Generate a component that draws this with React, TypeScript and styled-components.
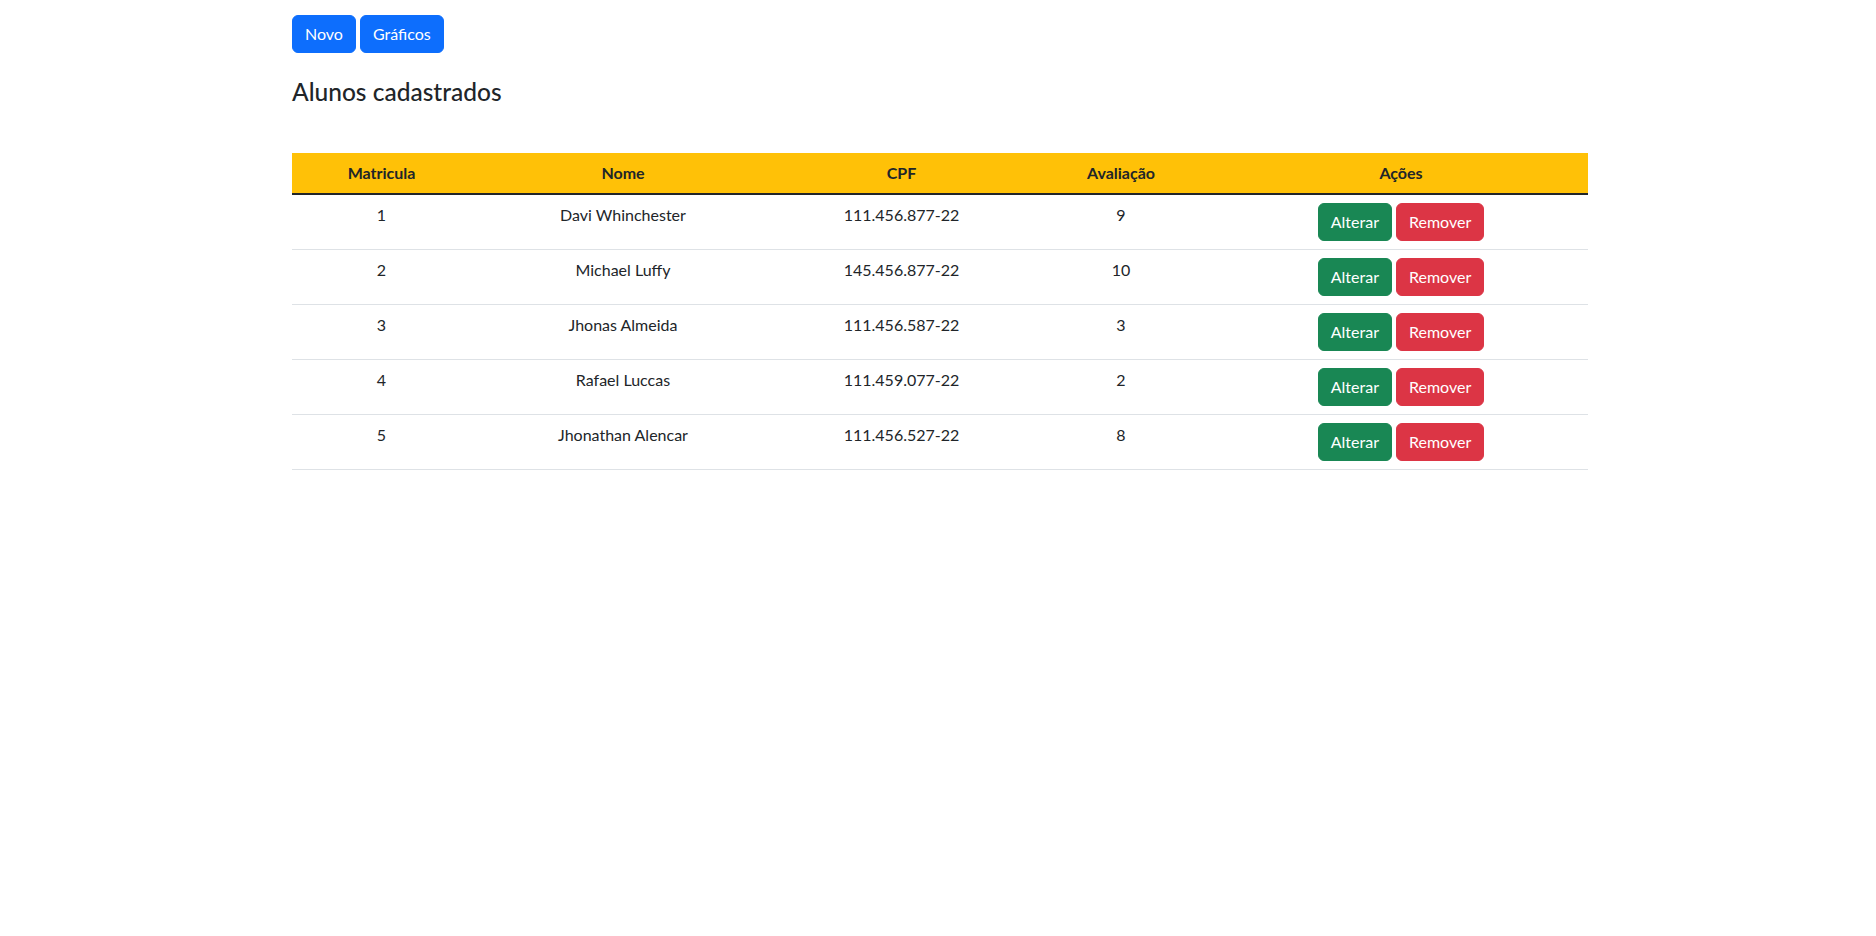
import React from "react";
import styled, { createGlobalStyle } from "styled-components";

const GlobalStyle = createGlobalStyle`
  * {
    box-sizing: border-box;
  }
  body {
    margin: 0;
    font-family: "Segoe UI", Lato, "Noto Sans", sans-serif;
    font-size: 16px;
    line-height: 1.5;
    color: #212529;
    background: #fff;
  }
`;

type Aluno = {
  matricula: number;
  nome: string;
  cpf: string;
  avaliacao: number;
};

const alunos: Aluno[] = [
  { matricula: 1, nome: "Davi Whinchester", cpf: "111.456.877-22", avaliacao: 9 },
  { matricula: 2, nome: "Michael Luffy", cpf: "145.456.877-22", avaliacao: 10 },
  { matricula: 3, nome: "Jhonas Almeida", cpf: "111.456.587-22", avaliacao: 3 },
  { matricula: 4, nome: "Rafael Luccas", cpf: "111.459.077-22", avaliacao: 2 },
  { matricula: 5, nome: "Jhonathan Alencar", cpf: "111.456.527-22", avaliacao: 8 },
];

const colunas = [
  { titulo: "Matricula", largura: 179 },
  { titulo: "Nome", largura: 304 },
  { titulo: "CPF", largura: 253 },
  { titulo: "Avaliação", largura: 186 },
  { titulo: "Ações", largura: 374 },
];

const cores = {
  primary: "#0d6efd",
  success: "#198754",
  danger: "#dc3545",
};

const App = () => {
  return (
    <>
      <GlobalStyle />
      <Container>
        <Toolbar>
          <Button $variant="primary">Novo</Button>
          <Button $variant="primary">Gráficos</Button>
        </Toolbar>
        <Title>Alunos cadastrados</Title>
        <Table>
          <colgroup>
            {colunas.map((c) => (
              <Col key={c.titulo} $width={c.largura} />
            ))}
          </colgroup>
          <Head>
            <tr>
              {colunas.map((c) => (
                <Th key={c.titulo}>{c.titulo}</Th>
              ))}
            </tr>
          </Head>
          <tbody>
            {alunos.map((a) => (
              <Row key={a.matricula}>
                <Td>{a.matricula}</Td>
                <Td>{a.nome}</Td>
                <Td>{a.cpf}</Td>
                <Td>{a.avaliacao}</Td>
                <Td>
                  <Actions>
                    <Button $variant="success">Alterar</Button>
                    <Button $variant="danger">Remover</Button>
                  </Actions>
                </Td>
              </Row>
            ))}
          </tbody>
        </Table>
      </Container>
    </>
  );
};

const Container = styled.div`
  max-width: 1296px;
  margin: 0 auto;
  padding-top: 15px;
  position: relative;
  left: 2px;
`;

const Toolbar = styled.div`
  display: flex;
  gap: 4px;
`;

const Button = styled.button<{ $variant: keyof typeof cores }>`
  display: inline-block;
  padding: 6px 12px;
  font-family: inherit;
  font-size: 16px;
  line-height: 24px;
  font-weight: 400;
  color: #fff;
  background-color: ${(p) => cores[p.$variant]};
  border: 1px solid ${(p) => cores[p.$variant]};
  border-radius: 6px;
  cursor: pointer;
`;

const Title = styled.h4`
  margin: 24px 0 47px;
  font-size: 24.5px;
  font-weight: 500;
  line-height: 1.2;
`;

const Table = styled.table`
  width: 100%;
  border-collapse: collapse;
  table-layout: fixed;
  text-align: center;
`;

const Col = styled.col<{ $width: number }>`
  width: ${(p) => p.$width}px;
`;

const Head = styled.thead`
  background-color: #ffc107;
  border-bottom: 2px solid #212529;
`;

const Th = styled.th`
  padding: 8px;
  font-weight: 700;
  vertical-align: bottom;
`;

const Row = styled.tr`
  border-bottom: 1px solid #dee2e6;
`;

const Td = styled.td`
  padding: 8px;
  vertical-align: top;
`;

const Actions = styled.div`
  display: flex;
  justify-content: center;
  gap: 4px;
`;

export default App;
